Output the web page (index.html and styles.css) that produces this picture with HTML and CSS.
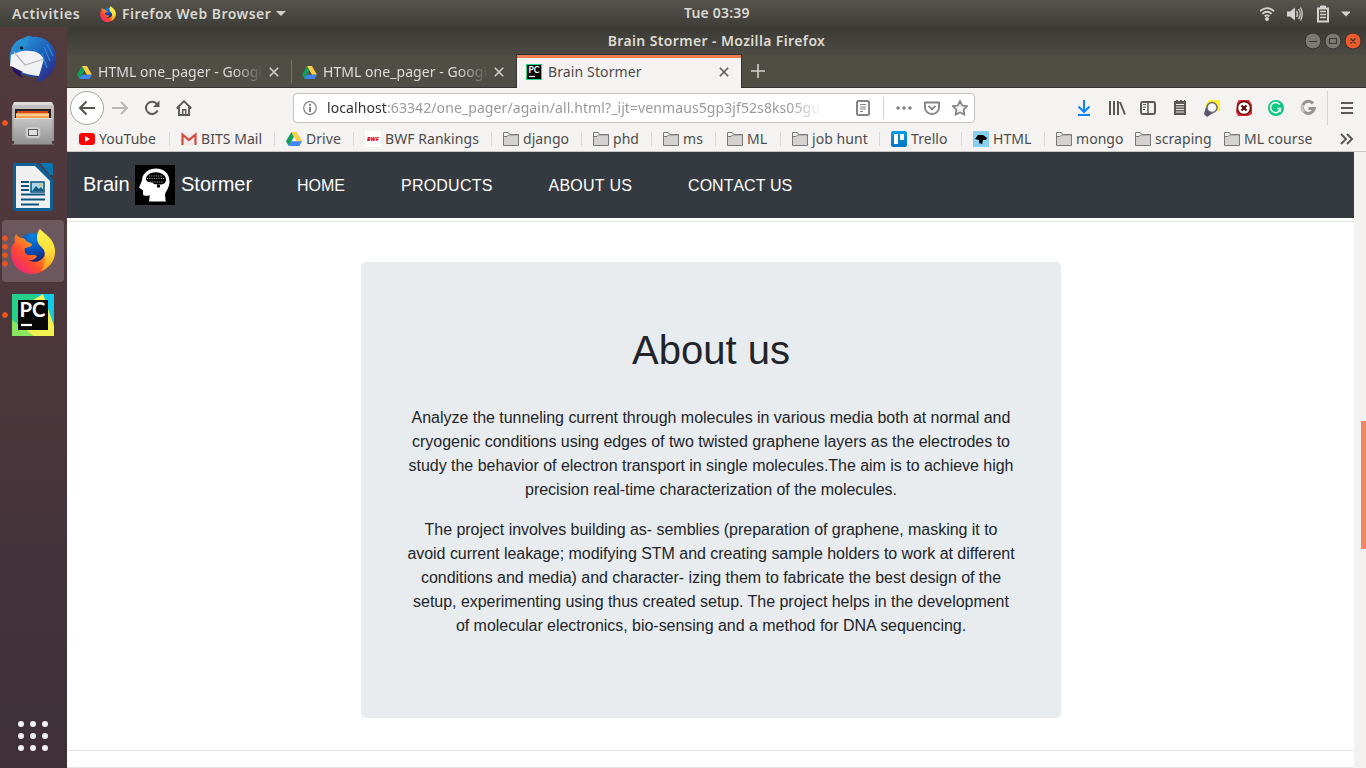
FILE: index.html
```html
<!DOCTYPE html>
<html lang="en">
<head>
<meta charset="utf-8">
<title>Brain Stormer</title>
<link rel="stylesheet" href="styles.css">
</head>
<body>
<svg class="defs" width="0" height="0" aria-hidden="true">
  <defs>
    <linearGradient id="tb" x1="0" y1="0" x2="1" y2="1"><stop offset="0" stop-color="#32a5de"/><stop offset=".5" stop-color="#1c64bd"/><stop offset="1" stop-color="#31197a"/></linearGradient>
    <linearGradient id="metal" x1="0" y1="0" x2="0" y2="1"><stop offset="0" stop-color="#c6c6c6"/><stop offset="1" stop-color="#929292"/></linearGradient>
    <linearGradient id="fox" x1="1" y1="0" x2="0" y2="1"><stop offset="0" stop-color="#ffd93a"/><stop offset=".35" stop-color="#ffa21c"/><stop offset=".62" stop-color="#ff4a30"/><stop offset="1" stop-color="#e8149a"/></linearGradient>
    <linearGradient id="tail" x1="0" y1="0" x2="0" y2="1"><stop offset="0" stop-color="#fff44f"/><stop offset=".5" stop-color="#ffdf3a"/><stop offset="1" stop-color="#ff9a1a"/></linearGradient>
    <radialGradient id="globe" cx=".5" cy=".1" r=".85"><stop offset="0" stop-color="#0a84e0"/><stop offset=".5" stop-color="#0a52bc"/><stop offset="1" stop-color="#152065"/></radialGradient>
    <linearGradient id="trello" x1="0" y1="0" x2="0" y2="1"><stop offset="0" stop-color="#0c9be8"/><stop offset="1" stop-color="#0274c2"/></linearGradient>
    <symbol id="firefox" viewBox="0 0 44 45">
      <circle cx="22" cy="20" r="16" fill="url(#globe)"/>
      <path d="M5 5c1 2 3 4 6 4 2 0 3 1 4 3l6 3c0 3-3 3-7 4-1 3 0 6 3 7 3 1 5-1 9 1-2 4-5 5-9 4 7 4 16 1 17-7l5-12 4 8c0 14-9 25-22 25C8 45 0 35 0 23c0-4 1-7 4-10-1-3 0-6 1-8z" fill="url(#fox)"/>
      <path d="M29 0c4 5 13 8 15 20 1 12-6 19-14 22 5-7 5-14 3-21-3-4-7-6-7-12 0-4 1-7 3-9z" fill="url(#tail)"/>
    </symbol>
    <symbol id="drive" viewBox="0 0 16 14">
      <path d="M5.4 0 0 9.3 2.7 14 8 4.7z" fill="#11a05c"/><path d="M5.4 0h5.2L16 9.3h-5.3z" fill="#ffcd42"/><path d="M5.3 9.3H16L13.3 14H2.7z" fill="#4285f4"/>
    </symbol>
    <symbol id="folder" viewBox="0 0 16 14">
      <path d="M.5 13.5V.5h4.7l1.5 2h8.8v11z" fill="#f4f3f2" stroke="#777"/><path d="M1 4h14v9H1z" fill="#d3d2d1"/><path d="M.5 4.5H4L5.5 3h10" fill="none" stroke="#777"/>
    </symbol>
    <symbol id="close" viewBox="0 0 10 10"><path d="M.8.8l8.4 8.4M9.2.8.8 9.2" stroke="currentColor" stroke-width="1.6" fill="none"/></symbol>
    <clipPath id="pcclip"><rect width="42" height="42"/></clipPath>
  </defs>
</svg>

<header class="topbar">
  <span class="activities">Activities</span>
  <svg class="app-icon" width="16" height="16"><use href="#firefox"/></svg>
  <span class="app-name">Firefox Web Browser</span>
  <svg class="app-caret" width="10" height="5"><path d="M0 0h10L5 5z" fill="#d2d1ce"/></svg>
  <span class="clock">Tue 03:39</span>
  <svg class="tray" width="90" height="18" viewBox="0 0 90 18" fill="none" stroke="#d4d3d0">
    <g stroke-width="1.800"><path d="M0 6.200q7-6.200 14 0M2.400 8.900q4.600-4.300 9.200 0M4.700 11.400q2.300-2 4.600 0" /></g>
    <circle cx="7" cy="14" r="2" fill="#d4d3d0" stroke="none"/>
    <path d="M27 6.500h3l5-4v13l-5-4h-3z" fill="#d4d3d0" stroke="none"/>
    <path d="M36.500 6q2 3 0 6M38.500 4q3.500 5 0 10M40.500 2.500q3.500 6.500 0 13" stroke-width="1.300"/>
    <path d="M58 3.500h10v13H58z" stroke-width="2"/><path d="M60.500 1h5v2h-5z" fill="#d4d3d0"/><path d="M60 6.500h6M60 9.500h6M60 12.500h6" stroke-width="1.300"/>
    <path d="M81 6.500h10l-5 5z" fill="#d4d3d0" stroke="none"/>
  </svg>
</header>

<div class="desktop">
  <aside class="dock">
    <div class="dock-item">
      <svg width="50" height="48" viewBox="0 0 50 48">
        <path d="M16 3C19 0 23 1 24 2c11-2 23 7 24 19 1 10-4 19-13 24-2 1-4 2-7 2 2-2 1-3 3-5-9 1-23-4-28-12C-1 20 4 5 16 3z" fill="url(#tb)"/>
        <path d="M3 20C10 16 16 15 22 16c7 0 11 3 14 8l-5 17C19 40 9 36 2 31z" fill="#f2f2f4"/>
        <path d="M6 17l11 13 19-6" fill="none" stroke="#b8b7ba" stroke-width="1.300"/>
        <path d="M10 14c2-6 5-10 10-12 2 5-1 9-5 11-1 3-3 4-7 5z" fill="#2790d4"/><circle cx="13.500" cy="13" r="1.700" fill="#123"/>
        <path d="M36 12l6 14M39 9l6 12M34 18l5 15" stroke="#2b84d2" stroke-width="1.500"/>
        <path d="M3 31l12 6-3 1 3 5C9 41 5 37 3 31z" fill="#26145f"/>
      </svg>
    </div>
    <div class="dock-item">
      <i class="dots one"></i>
      <svg width="42" height="44" viewBox="0 0 42 44">
        <path d="M2 1h38l2 4v35H0V5z" fill="url(#metal)"/><path d="M1 4L3 1h36l2 3z" fill="#dcdcdc"/>
        <path d="M3 8h36v10H3z" fill="#26201e"/><path d="M5 10h31v7H5z" fill="#d3481e"/><path d="M4 12h33v5H4z" fill="#f6a04b"/><path d="M4 14h33" stroke="#fff3d8" stroke-width="1"/>
        <path d="M2 17h38v26H2z" fill="url(#metal)"/><path d="M2 17.500h38" stroke="#ddd"/><path d="M0 43.500h42" stroke="#706a6a"/>
        <rect x="14" y="26" width="14" height="11" rx="2" fill="#d4d4d4" stroke="#b9b9b9"/><rect x="16.500" y="28.500" width="9" height="6" fill="#dfdfdf" stroke="#555"/>
      </svg>
    </div>
    <div class="dock-item">
      <svg width="42" height="48" viewBox="0 0 42 48">
        <path d="M3 0h22l16 16v30a2 2 0 0 1-2 2H3a2 2 0 0 1-2-2V2a2 2 0 0 1 2-2z" fill="#0d6096"/><path d="M28 0h11a2 2 0 0 1 2 2v10h-3z" fill="#0774b3"/>
        <path d="M4 3h19l15 15v27H4z" fill="#f0f0f0"/>
        <path d="M9 19h8M9 23h8M9 27h8M9 31.500h24M9 36.500h24M9 41.500h18" stroke="#0b527d" stroke-width="1.900"/>
        <path d="M19 19h13v10H19z" fill="#abd7f3" stroke="#0a527d" stroke-width="1.500"/><path d="M20 28l4-5 3 3 2-2 3 4z" fill="#175c7d"/><circle cx="28.500" cy="22" r="1.500" fill="#e9bd36"/>
      </svg>
    </div>
    <div class="dock-item active">
      <i class="dots four"></i>
      <svg width="44" height="45" viewBox="0 0 44 45"><use href="#firefox"/></svg>
    </div>
    <div class="dock-item">
      <i class="dots one"></i>
      <svg width="42" height="42" viewBox="0 0 42 42"><g clip-path="url(#pcclip)">
        <path d="M0 0h42v42H0z" fill="#25d18a"/><path d="M24 0h18v34L30 12z" fill="#10cbe8"/><path d="M18 8L31 0l11 32v10H14z" fill="#f3f253"/><path d="M0 26l22 16H0z" fill="#8be65f"/></g>
        <path d="M6 6h30v30H6z" fill="#080808"/><path d="M9 31h11" stroke="#fff" stroke-width="2.200"/>
        <text class="pc-text" x="7.500" y="23" textLength="26" lengthAdjust="spacingAndGlyphs">PC</text>
      </svg>
    </div>
    <div class="apps"><b></b><b></b><b></b><b></b><b></b><b></b><b></b><b></b><b></b></div>
  </aside>

  <main class="window">
    <div class="titlebar">
      <span class="window-title">Brain Stormer - Mozilla Firefox</span>
      <svg class="controls" width="58" height="18" viewBox="0 0 58 18">
        <g fill="#7a7974" stroke="#33322e"><circle cx="9" cy="9" r="8"/><circle cx="29" cy="9" r="8"/><circle cx="49" cy="9" r="8" fill="#ec5b2c"/></g>
        <path d="M5 9.500h8M25.500 6.500h7v5h-7zM46.500 6.500l5 5M51.500 6.500l-5 5" fill="none" stroke="#3a3934" stroke-width="1.200"/>
      </svg>
    </div>
    <div class="tabs">
      <div class="tab">
        <svg width="15" height="13"><use href="#drive"/></svg><span class="tab-label faded">HTML one_pager - Googl</span>
        <svg class="tab-close" width="10" height="10"><use href="#close"/></svg>
      </div>
      <div class="tab second">
        <svg width="15" height="13"><use href="#drive"/></svg><span class="tab-label faded">HTML one_pager - Googl</span>
        <svg class="tab-close" width="10" height="10"><use href="#close"/></svg>
      </div>
      <div class="tab current">
        <svg width="16" height="16" viewBox="0 0 16 16"><path d="M0 0h16v16H0z" fill="#21d789"/><path d="M1 1h14v14H1z" fill="#080808"/><path d="M3 12.500h6" stroke="#fff" stroke-width="1.200"/><text class="pc-text small" x="2.500" y="9" textLength="11" lengthAdjust="spacingAndGlyphs">PC</text></svg>
        <span class="tab-label">Brain Stormer</span>
        <svg class="tab-close" width="10" height="10"><use href="#close"/></svg>
      </div>
      <svg class="new-tab" width="14" height="14"><path d="M7 0v14M0 7h14" stroke="#d2d0cb" stroke-width="1.600"/></svg>
    </div>

    <div class="toolbar">
      <div class="back"><svg width="18" height="16" viewBox="0 0 18 16" fill="none" stroke="#55534f" stroke-width="2"><path d="M17 8H2M8.500 1.500L2 8l6.500 6.500"/></svg></div>
      <svg class="forward" width="17" height="14" viewBox="0 0 17 14" fill="none" stroke="#b9b8b6" stroke-width="2"><path d="M0 7h15M9 1l6 6-6 6"/></svg>
      <svg class="reload" width="16" height="16" viewBox="0 0 16 16" fill="none" stroke="#5a5957" stroke-width="2"><path d="M13.600 10.500A6.100 6.100 0 1 1 13 4.300"/><path d="M15.500.5v6.500H9z" fill="#5a5957" stroke="none"/></svg>
      <svg class="home" width="16" height="16" viewBox="0 0 16 16" fill="none" stroke="#5a5957" stroke-width="1.900"><path d="M.7 8.500L8 1.200l7.300 7.300M3 7v8h10V7"/><path d="M6.700 15V9.800h3V15" stroke-width="1.500"/></svg>
      <div class="urlbar">
        <svg width="14" height="14" viewBox="0 0 14 14"><circle cx="7" cy="7" r="6.300" fill="none" stroke="#858482" stroke-width="1.200"/><path d="M7 6v5M7 3v1.800" stroke="#6d6c6a" stroke-width="1.700"/></svg>
        <span class="url"><em>localhost</em>:63342/one_pager/again/all.html?_ijt=venmaus5gp3jf52s8ks05gu</span>
        <svg class="url-actions" width="114" height="24" viewBox="0 0 114 24" fill="none" stroke="#858482">
          <rect x="2" y="5" width="12" height="14" rx="1.500" stroke-width="2"/><path d="M5 8.500h6M5 11h6M5 13h6M5 15.500h3" stroke-width="1.200"/>
          <path d="M28.500 1v22" stroke="#cfcecd"/>
          <g fill="#858482" stroke="none"><circle cx="43" cy="12" r="1.800"/><circle cx="49" cy="12" r="1.800"/><circle cx="55" cy="12" r="1.800"/></g>
          <path d="M70 6.500h14v5a7 6.500 0 0 1-14 0z" stroke-width="1.900" stroke-linejoin="round"/><path d="M73.500 9.800l3.500 3.500 3.500-3.500" stroke-width="1.900"/>
          <path d="M105 4.800l2.200 4.800 5.100.6-3.800 3.500 1 5.100-4.500-2.500-4.500 2.500 1-5.100-3.800-3.500 5.100-.6z" stroke-width="1.800" stroke-linejoin="round"/>
        </svg>
      </div>
      <svg class="extensions" width="280" height="34" viewBox="0 0 280 34" fill="none">
        <path d="M7 9v12M1.500 15.500L7 21l5.500-5.500M1 24h12" stroke="#0a84ff" stroke-width="2"/>
        <g stroke="#5a5957"><path d="M33 10v14M37 10v14M41 10v14M43 11l5 12.500" stroke-width="2"/>
        <rect x="64" y="11" width="14" height="12" rx="2" stroke-width="2"/><path d="M71 11v12" stroke-width="1.500"/><path d="M66 13.500h3M66 16h3M66 18.500h2"/></g>
        <path d="M97 10h2V9h2v1h2V9h2v1h2V9h1v1h1v14H97z" fill="#5a5957"/><path d="M99 13.500h8M99 16h8M99 18.500h8M99 21h8" stroke="#eee"/>
        <path d="M132 9h11v11h-7l-8-5z" fill="#ffef2d"/><path d="M129 16l7 6-6 4-3-3z" fill="#575569"/><circle cx="135" cy="16.500" r="5" fill="#f7f7f8" stroke="#67656f" stroke-width="1.400"/>
        <path d="M162 9l10 0 3 5v9l-4 2h-10l-2-4 1-9z" fill="#d9282e"/><circle cx="167" cy="17" r="6.500" fill="#fff" stroke="#5c0808" stroke-width="1.300"/><path d="M164.500 14.500l5 5M169.500 14.500l-5 5" stroke="#5c0808" stroke-width="2.200"/>
        <circle cx="199" cy="17" r="8" fill="#0bc783"/><path d="M202.500 13.500a5 5 0 1 0 1 4h-3M201 20h3" stroke="#fff" stroke-width="1.500"/>
        <path d="M236 12.500a6 6 0 1 0 1.300 5h-5.800" stroke="#969594" stroke-width="3"/><path d="M226 14a6 6 0 0 0 1 7" stroke="#c3c2c1" stroke-width="3"/>
        <path d="M250.500 0v34" stroke="#d5d3d2"/><path d="M264 12h12M264 17h12M264 22h12" stroke="#5a5957" stroke-width="2"/>
      </svg>
    </div>

    <nav class="bookmarks">
      <a class="bm-yt"><svg width="16" height="16"><rect y="2" width="16" height="12" rx="3" fill="#f00"/><path d="M6 5l5 3-5 3z" fill="#fff"/></svg><span>YouTube</span></a>
      <a class="bm-bits"><svg width="16" height="16"><path d="M1 3h14v11H1z" fill="#eceaea"/><path d="M1.500 14V3.500L8 9l6.500-5.500V14" fill="none" stroke="#d54a3f" stroke-width="2.200"/></svg><span>BITS Mail</span></a>
      <a class="bm-drive"><svg width="16" height="14"><use href="#drive"/></svg><span>Drive</span></a>
      <a class="bm-bwf"><svg width="16" height="16"><path d="M0 0h16v16H0z" fill="#fff"/><text class="bwf-text" x="2" y="9.500" textLength="12" lengthAdjust="spacingAndGlyphs">BWF</text></svg><span>BWF Rankings</span></a>
      <a class="bm-django"><svg width="16" height="14"><use href="#folder"/></svg><span>django</span></a>
      <a class="bm-phd"><svg width="16" height="14"><use href="#folder"/></svg><span>phd</span></a>
      <a class="bm-ms"><svg width="16" height="14"><use href="#folder"/></svg><span>ms</span></a>
      <a class="bm-ml"><svg width="16" height="14"><use href="#folder"/></svg><span>ML</span></a>
      <a class="bm-job"><svg width="16" height="14"><use href="#folder"/></svg><span>job hunt</span></a>
      <a class="bm-trello"><svg width="16" height="16"><rect width="16" height="16" rx="2" fill="url(#trello)"/><path d="M3 3h4v10H3zM9 3h4v6H9z" fill="#fff"/></svg><span>Trello</span></a>
      <a class="bm-html"><svg width="16" height="16"><path d="M0 0h16v16H0z" fill="#87ceef"/><path d="M2 8l3-4h5l4 3-1 2h-3l-1 4-3-1v-3z" fill="#000"/></svg><span>HTML</span></a>
      <a class="bm-mongo plain"><svg width="16" height="14"><use href="#folder"/></svg><span>mongo</span></a>
      <a class="bm-scraping plain"><svg width="16" height="14"><use href="#folder"/></svg><span>scraping</span></a>
      <a class="bm-course plain"><svg width="16" height="14"><use href="#folder"/></svg><span>ML course</span></a>
      <svg width="14" height="12" fill="none" stroke="#5a5957" stroke-width="2"><path d="M1 1l5 5-5 5M7 1l5 5-5 5"/></svg>
    </nav>

    <div class="viewport">
      <div class="page">
        <nav class="navbar">
          <a class="brand"><span>Brain</span>
            <svg width="40" height="40" viewBox="0 0 40 40"><path d="M0 0h40v40H0z" fill="#000"/>
              <path d="M14 36.500l.8-6.200c-2 .6-5 .8-6.300 0-.8-1-.4-3-.6-5L4 22.500l3-7C7 8 14 3.500 21 3.500c8 0 13.500 5 13.500 13 0 7-4.500 10-4.500 14l.8 6z" fill="#fff"/>
              <path d="M11 14c0-3 3-6 8-6.500 5-1 12 2 12 7 0 4-3 5-6 5v3h-3v-3c-2 0-4-1-5-2-3 0-6-1-6-3.500z" fill="#000"/>
              <path d="M14 11h14M12 13.500h18M15 17h13M19 19.500h6" stroke="#ddd" stroke-width=".9" stroke-dasharray="1 1.300"/>
            </svg>
            <span>Stormer</span></a>
          <a>HOME</a><a class="wide">PRODUCTS</a><a class="wide">ABOUT US</a><a>CONTACT US</a>
        </nav>
        <section class="about">
          <div class="jumbotron">
            <h1>About us</h1>
            <p>Analyze the tunneling current through molecules in various media both at normal and<br>cryogenic conditions using edges of two twisted graphene layers as the electrodes to<br>study the behavior of electron transport in single molecules.The aim is to achieve high<br>precision real-time characterization of the molecules.</p>
            <p>The project involves building as- semblies (preparation of graphene, masking it to<br>avoid current leakage; modifying STM and creating sample holders to work at different<br>conditions and media) and character- izing them to fabricate the best design of the<br>setup, experimenting using thus created setup. The project helps in the development<br>of molecular electronics, bio-sensing and a method for DNA sequencing.</p>
          </div>
        </section>
        <div class="next-section"></div>
      </div>
      <div class="scrollbar"><div class="thumb"></div></div>
    </div>
  </main>
</div>
</body>
</html>
```
FILE: styles.css
```css
* { box-sizing: border-box; }
body { margin: 0; width: 1366px; height: 768px; overflow: hidden; font: 14px/20px "Noto Sans", sans-serif; color: #4c4c4c; white-space: nowrap; }
svg { flex: none; display: block; }
.defs { position: absolute; }

.topbar { position: relative; height: 27px; display: flex; align-items: center; background: linear-gradient(#57544c, #3e3d38); color: #dad8d3; font-weight: 600; font-size: 14px; padding-left: 12px; }
.activities { width: 88px; letter-spacing: .57px; }
.app-icon { margin-right: 6px; }
.app-name { width: 154px; letter-spacing: .47px; }
.clock { position: absolute; left: 684px; top: 3px; letter-spacing: .2px; }
.tray { margin: 0 16px 0 auto; }

.desktop { display: flex; height: 741px; }
.dock { width: 67px; background: linear-gradient(#523a3d, #4b363b 45%, #41323a 85%, #3e3036); display: flex; flex-direction: column; padding-top: 1px; }
.dock-item { position: relative; width: 62px; height: 62px; margin: 0 0 2px 2px; display: flex; align-items: center; justify-content: center; border-radius: 4px; }
.dock-item.active { background: #6c575e; }
.dots { position: absolute; left: 0; top: 50%; transform: translateY(-50%); width: 6px; background: radial-gradient(circle, #e95420 2.500px, transparent 3.100px) 0 0 / 6px 8.500px; }
.dots.one { height: 8.500px; }
.dots.four { height: 34px; }
.pc-text { font: 700 20px Lato, sans-serif; fill: #fff; }
.pc-text.small { font-size: 9px; }
.apps { margin: auto 0 15px 16px; display: grid; grid-template-columns: repeat(3, 6px); gap: 6px; padding: 2px; }
.apps b { height: 6px; border-radius: 3px; background: #f2f1f1; }

.window { width: 1299px; display: flex; flex-direction: column; }
.titlebar { height: 28px; position: relative; background: linear-gradient(#3b3a36, #4c4a43); color: #dedbd3; font-weight: 600; font-size: 14px; letter-spacing: .37px; text-align: center; line-height: 28px; }
.controls { position: absolute; right: 4px; top: 5px; }
.tabs { height: 33px; display: flex; background: #504d45; border-bottom: 1px solid #34332f; }
.tab { width: 225px; height: 32px; padding: 2px 0 0 10px; display: flex; align-items: center; color: #deddd9; position: relative; }
.tab::after { content: ""; position: absolute; right: 0; top: 5px; width: 1px; height: 23px; background: #77746c; }
.tab.second::after, .tab.current::after { display: none; }
.tab-label { width: 165px; margin-left: 6px; letter-spacing: .12px; }
.tab-label.faded { letter-spacing: .05px; mask-image: linear-gradient(90deg, #000 135px, transparent 166px); }
.tab-close { margin-left: 6px; color: #d2d0cb; }
.tab.current { width: 224px; height: 33px; background: #f4f3f2; color: #4d4c4a; border-top: 3px solid #ef7d53; padding: 0 0 3px 9px; outline: 1px solid #34332f; clip-path: inset(-1px -1px 0); }
.new-tab { margin: 9px 0 0 10px; }
.current .tab-close { color: #5c5b59; }

.toolbar { height: 40px; background: #f4f3f2; display: flex; align-items: center; }
.back { width: 34px; height: 34px; margin-left: 3px; border: 1px solid #aaa8a6; border-radius: 50%; background: #fdfdfd; display: flex; align-items: center; justify-content: center; }
.forward { margin-left: 8px; }
.reload { margin-left: 15px; }
.home { margin-left: 16px; }
.urlbar { width: 682px; height: 30px; margin-left: 101px; border: 1px solid #c5c3c1; border-radius: 4px; background: #fff; display: flex; align-items: center; padding-left: 9px; }
.url { width: 496px; margin-left: 10px; padding-top: 1px; letter-spacing: .09px; color: #9a9a9a; mask-image: linear-gradient(90deg, #000 462px, transparent 496px); }
.url em { font-style: normal; color: #323232; }
.url-actions { margin-left: 32px; }
.extensions { margin-left: 102px; }

.bookmarks { height: 25px; background: #f4f3f2; border-bottom: 1px solid #c8c6c4; padding: 0 0 1px 12px; display: grid; grid-template-columns: 102px 105px 79px 138px 90px 70px 64px 65px 99px 82px 83px 79px 89px 116px 14px; align-items: center; letter-spacing: .05px; }
.bookmarks a { display: flex; align-items: center; }
.bookmarks span { margin-left: 4px; padding-top: 1px; }
.bookmarks a::after { content: ""; width: 1px; height: 14px; background: #dad8d6; margin: 0 11px 0 auto; }
.bookmarks .plain::after { display: none; }
.bwf-text { font: italic 900 5px "Open Sans", sans-serif; fill: #e3001b; }

.viewport { flex: 1; display: flex; background: #fff; font: 16px/24px "Liberation Sans", Arial, sans-serif; color: #212529; }
.page { width: 1287px; }
.navbar { height: 66px; background: #343a40; color: #fff; padding: 0 16px; display: flex; align-items: center; font-kerning: none; }
.brand { display: flex; align-items: center; gap: 6px; font-size: 20px; width: 170px; margin-right: 44px; }
.brand span { padding-bottom: 2px; }
.brand span:first-child { width: 46px; }
.navbar a:not(.brand) { margin-right: 56px; padding-top: 2px; }
.navbar .wide { letter-spacing: .22px; }
.about { margin-top: 3px; height: 530px; border: solid #e5e5e5; border-width: 1px 0; padding: 40px 0 0 294px; }
.jumbotron { width: 700px; height: 456px; border-radius: 5px; background: #e9ecef; padding: 64px 32px; text-align: center; }
.jumbotron h1 { margin: 0 0 32px; font-size: 40px; line-height: 48px; font-weight: 400; }
.jumbotron p { margin: 0 0 16px; letter-spacing: -.03px; }
.next-section { height: 17px; border-bottom: 1px solid #e5e5e5; }
.scrollbar { width: 12px; background: #f2f1f0; display: flex; justify-content: flex-end; padding-top: 269px; }
.thumb { width: 5px; height: 128px; background: #f08763; }
```
